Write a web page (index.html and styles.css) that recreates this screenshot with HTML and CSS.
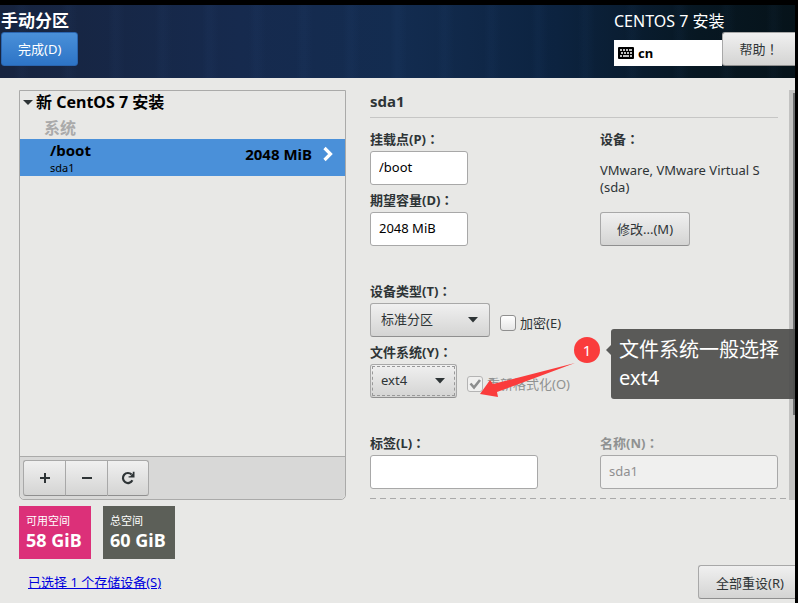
FILE: index.html
```html
<!DOCTYPE html>
<html lang="zh-CN">
<head>
    <meta charset="UTF-8">
    <title>手动分区 - CENTOS 7 安装</title>
    <link rel="stylesheet" href="styles.css">
</head>
<body>
    <header class="topbar">
        <div class="topbar-left">
            <h1>手动分区</h1>
            <button type="button" class="btn btn-done">完成(D)</button>
        </div>
        <div class="topbar-right">
            <div class="product">CENTOS 7 安装</div>
            <div class="topbar-tools">
                <div class="keyboard">
                    <svg width="16" height="12" viewBox="0 0 16 12">
                        <rect width="16" height="12" rx="1" fill="#000"/>
                        <path d="M2 3h2M5 3h2M8 3h2M11 3h3M3 6h2M6 6h2M9 6h2M12 6h2M2 9h2M5 9h6M12 9h2" stroke="#fff" stroke-width="1.6"/>
                    </svg>
                    <span>cn</span>
                </div>
                <button type="button" class="btn btn-help">帮助<span lang="zh-TW">！</span></button>
            </div>
        </div>
    </header>

    <main class="content">
        <section class="tree">
            <div class="tree-list">
                <div class="tree-root"><span class="expander"></span>新 CentOS 7 安装</div>
                <div class="tree-group">系统</div>
                <div class="tree-item">
                    <div class="mount">
                        <strong>/boot</strong>
                        <small>sda1</small>
                    </div>
                    <span class="size">2048 MiB</span>
                    <svg width="10" height="16" viewBox="0 0 10 16">
                        <path d="M1.5 2L7.5 8L1.5 14" fill="none" stroke="#fff" stroke-width="3.2"/>
                    </svg>
                </div>
            </div>
            <div class="toolbar">
                <div class="btn-group">
                    <button type="button" class="btn" aria-label="添加">
                        <svg width="12" height="12" viewBox="0 0 12 12"><path d="M6 1v10M1 6h10" stroke="#2e3436" stroke-width="2"/></svg>
                    </button>
                    <button type="button" class="btn" aria-label="删除">
                        <svg width="12" height="12" viewBox="0 0 12 12"><path d="M1 6h10" stroke="#2e3436" stroke-width="2"/></svg>
                    </button>
                    <button type="button" class="btn" aria-label="刷新">
                        <svg width="14" height="14" viewBox="0 0 14 14">
                            <path d="M11.4 9.3A5 5 0 1 1 10.6 3.6" fill="none" stroke="#2e3436" stroke-width="2.2"/>
                            <path d="M13.5 0.8V6.5H7.6V5.2H9.2L11.8 2.6V0.8Z" fill="#2e3436"/>
                        </svg>
                    </button>
                </div>
            </div>
        </section>

        <section class="details">
            <form class="panel">
                <h2>sda1</h2>
                <div class="row">
                    <div class="fields">
                        <div class="field">
                            <label for="mountPoint">挂载点(P)<span lang="zh-TW">：</span></label>
                            <input type="text" id="mountPoint" class="entry-short" value="/boot">
                        </div>
                        <div class="field">
                            <label for="capacity">期望容量(D)<span lang="zh-TW">：</span></label>
                            <input type="text" id="capacity" class="entry-short" value="2048 MiB">
                        </div>
                    </div>
                    <div class="device">
                        <h3>设备<span lang="zh-TW">：</span></h3>
                        <p>VMware, VMware Virtual S (sda)</p>
                        <button type="button" class="btn">修改...(M)</button>
                    </div>
                </div>

                <div class="fields">
                    <div class="field">
                        <label for="deviceType">设备类型(T)<span lang="zh-TW">：</span></label>
                        <div class="inline">
                            <select id="deviceType" class="select-type">
                                <option>标准分区</option>
                            </select>
                            <input type="checkbox" id="encrypt">
                            <label for="encrypt" class="check-label">加密(E)</label>
                        </div>
                    </div>
                    <div class="field">
                        <label for="fileSystem">文件系统(Y)<span lang="zh-TW">：</span></label>
                        <div class="inline">
                            <select id="fileSystem" class="select-fs">
                                <option>ext4</option>
                            </select>
                            <input type="checkbox" id="reformat" checked disabled>
                            <label for="reformat" class="check-label">重新格式化(O)</label>
                        </div>
                    </div>
                </div>

                <div class="row">
                    <div class="field">
                        <label for="label">标签(L)<span lang="zh-TW">：</span></label>
                        <input type="text" id="label" class="entry-label">
                    </div>
                    <div class="field disabled">
                        <label for="name">名称(N)<span lang="zh-TW">：</span></label>
                        <input type="text" id="name" value="sda1" disabled>
                    </div>
                </div>
            </form>
            <div class="scrollbar"><div class="thumb"></div></div>

            <!-- annotation over the file system field -->
            <div class="note">
                <svg class="note-arrow" width="96" height="36" viewBox="0 0 96 36">
                    <path d="M95 1L13 22L10 18L0 32L18 35L17 30Z" fill="#fa3c3c"/>
                </svg>
                <span class="note-number">1</span>
                <div class="note-text">文件系统一般选择 ext4</div>
            </div>
        </section>
    </main>

    <footer class="footer">
        <div class="summary">
            <div class="spaces">
                <div class="space space-free"><span>可用空间</span><strong>58 GiB</strong></div>
                <div class="space space-total"><span>总空间</span><strong>60 GiB</strong></div>
            </div>
            <a href="#">已选择 1 个存储设备(S)</a>
        </div>
        <button type="button" class="btn btn-reset">全部重设(R)</button>
    </footer>
</body>
</html>
```
FILE: styles.css
```css
* {
    box-sizing: border-box;
}

body {
    margin: 0;
    min-height: 100vh;
    display: flex;
    flex-direction: column;
    border-top: 5px solid #000;
    border-right: 3px solid #000;
    background-color: #e8e8e6;
    color: #2e3436;
    font-family: "Noto Sans", "Noto Sans CJK SC", sans-serif;
    font-size: 13px;
    line-height: 18px;
}

h1, h2, h3, p {
    margin: 0;
}

[lang="zh-TW"] {
    font-family: "Noto Sans CJK TC", sans-serif;
}

input, select, button {
    font-family: inherit;
    font-size: 13px;
    color: inherit;
}

.btn {
    height: 34px;
    padding: 0 16px 2px;
    border: 1px solid #a8a8a8;
    border-bottom-color: #8f8f8f;
    border-radius: 3px;
    background: linear-gradient(#f0f0f0, #d4d4d3);
    color: #2e3436;
    white-space: nowrap;
}

/* header */
.topbar {
    display: flex;
    justify-content: space-between;
    height: 73px;
    padding-top: 6px;
    background:
        repeating-linear-gradient(90deg, transparent 0 14px, rgba(70, 120, 190, 0.04) 20px 23px, transparent 31px 47px),
        linear-gradient(90deg, #17243f 0%, #162a4e 30%, #132c50 50%, #0c2340 70%, #071722 88%, #06131a 100%);
    color: #fff;
}

.topbar h1 {
    font-size: 17px;
    line-height: 20px;
}

.topbar-left {
    padding-left: 1px;
}

.btn-done {
    margin-top: 1px;
    border-color: #2a65b0;
    background: linear-gradient(#4a90d9, #2d74c6);
    color: #fff;
}

.product {
    font-size: 16px;
    line-height: 21px;
}

.topbar-tools {
    display: flex;
    align-items: flex-end;
}

.keyboard {
    display: flex;
    align-items: center;
    gap: 4px;
    width: 108px;
    height: 26px;
    padding-left: 4px;
    background-color: #fff;
    color: #000;
    font-weight: bold;
}

.btn-help {
    width: 73px;
    border-right: none;
    border-radius: 3px 0 0 3px;
}

/* partition list */
.content {
    flex: 1;
    display: grid;
    grid-template-columns: 327fr 425fr;
    gap: 24px;
    padding: 12px 0 0 19px;
}

.tree {
    display: flex;
    flex-direction: column;
    border: 1px solid #aaaaa9;
    border-radius: 0 0 5px 5px;
    color: #000;
}

.tree-list {
    flex: 1;
}

.tree-root {
    display: flex;
    align-items: center;
    gap: 3px;
    padding-left: 3px;
    font-size: 16px;
    font-weight: bold;
    line-height: 22px;
}

.expander {
    border: 5px solid transparent;
    border-top-color: #2e3436;
    border-bottom: none;
}

.tree-group {
    padding: 4px 0 0 24px;
    color: #aaa;
    font-size: 16px;
    font-weight: bold;
    line-height: 22px;
}

.tree-item {
    display: flex;
    align-items: center;
    padding: 1px 12px 0 30px;
    background-color: #4a90d9;
}

.mount {
    flex: 1;
    display: flex;
    flex-direction: column;
}

.mount strong, .size {
    font-size: 15px;
    font-weight: bold;
    line-height: 20px;
}

.mount small {
    font-size: 11px;
    line-height: 16px;
}

.size {
    margin-right: 11px;
    padding-bottom: 8px;
}

.tree-item svg {
    margin-bottom: 8px;
}

.toolbar {
    padding: 3px;
    border-top: 1px solid #aaaaa9;
    border-radius: 0 0 5px 5px;
    background-color: #d8d8d7;
}

.btn-group {
    display: flex;
}

.btn-group .btn {
    display: flex;
    align-items: center;
    justify-content: center;
    width: 42px;
    height: 36px;
    padding: 0;
    border-right: none;
    border-radius: 0;
}

.btn-group .btn:first-child {
    border-radius: 3px 0 0 3px;
}

.btn-group .btn:last-child {
    border-right: 1px solid #a8a8a8;
    border-radius: 0 3px 3px 0;
}

/* partition details */
.details {
    position: relative;
    display: flex;
}

.panel {
    flex: 1;
    display: flex;
    flex-direction: column;
    gap: 36px;
    padding: 0 11px 9px 0;
    background: repeating-linear-gradient(90deg, #aaa 0 6px, transparent 6px 10px) no-repeat left bottom 1px / 100% 1px;
}

.panel h2 {
    margin-bottom: -24px;
    padding-bottom: 5px;
    border-bottom: 1px solid #c6c6c5;
    font-size: 15px;
    line-height: 22px;
}

.row {
    display: grid;
    grid-template-columns: minmax(0, 230fr) minmax(0, 178fr);
}

.fields {
    display: flex;
    flex-direction: column;
    gap: 6px;
}

.field {
    display: flex;
    flex-direction: column;
    gap: 3px;
}

.field label, .device h3 {
    font-size: 13px;
    font-weight: bold;
    line-height: 18px;
}

input[type="text"] {
    height: 34px;
    padding: 0 8px 2px;
    border: 1px solid #a8a8a8;
    border-radius: 3px;
    background-color: #fff;
    color: #000;
}

input[type="text"]:disabled {
    background-color: #f0f0ef;
    color: #8f8f8f;
}

.entry-short {
    width: 98px;
}

.entry-label {
    width: 168px;
}

.disabled label {
    color: #8f9191;
}

.device p {
    margin: 14px 0 16px;
    line-height: 17px;
}

.inline {
    display: flex;
    align-items: center;
}

select {
    display: block;
    height: 34px;
    padding: 0 10px 2px;
    appearance: none;
    border: 1px solid #a8a8a8;
    border-bottom-color: #8f8f8f;
    border-radius: 3px;
    background: url("data:image/svg+xml,%3Csvg xmlns='http://www.w3.org/2000/svg' width='10' height='6'%3E%3Cpath d='M0 0h10L5 5.5z' fill='%232e3436'/%3E%3C/svg%3E") no-repeat right 11px center, linear-gradient(#f0f0f0, #d4d4d3);
}

.select-type {
    width: 120px;
}

.select-fs {
    width: 87px;
    outline: 1px dashed #999;
    outline-offset: -3px;
}

input[type="checkbox"] {
    appearance: none;
    width: 16px;
    height: 16px;
    margin: 6px 4px 0 10px;
    border: 1px solid #8f8f8f;
    border-radius: 3px;
    background: linear-gradient(#fff, #e6e6e6);
}

input[type="checkbox"]:disabled {
    border-color: #b4b4b4;
    background: #f0f0ef;
}

input[type="checkbox"]:checked {
    background: url("data:image/svg+xml,%3Csvg xmlns='http://www.w3.org/2000/svg' width='14' height='14'%3E%3Cpath d='M2.5 6.5L6 10.5L12 3' fill='none' stroke='%238c8e8e' stroke-width='2.6'/%3E%3C/svg%3E") no-repeat center, #f0f0ef;
}

.field .check-label {
    padding-top: 6px;
    font-weight: normal;
}

input:disabled + .check-label {
    color: #8f9191;
}

.scrollbar {
    width: 6px;
    padding: 3px 0 0 4px;
    background-color: #c2c2c1;
}

.thumb {
    height: 79%;
    background-color: #6d6f70;
}

/* annotation */
.note {
    position: absolute;
    top: 239px;
    right: 0;
    display: flex;
    align-items: flex-start;
    gap: 11px;
}

.note-arrow {
    position: absolute;
    top: 33px;
    left: -94px;
}

.note-number {
    width: 26px;
    height: 26px;
    margin-top: 8px;
    border-radius: 50%;
    background-color: #fa3c3c;
    color: #fff;
    font-size: 15px;
    line-height: 26px;
    text-align: center;
}

.note-text {
    position: relative;
    width: 184px;
    padding: 7px 8px;
    border-radius: 3px 0 0 3px;
    background-color: rgba(77, 77, 76, 0.92);
    color: #fff;
    font-size: 20px;
    line-height: 28px;
}

.note-text::before {
    content: "";
    position: absolute;
    top: 16px;
    left: -5px;
    border: 5px solid transparent;
    border-right-color: #5a5a59;
    border-left: none;
}

/* footer */
.footer {
    display: flex;
    justify-content: space-between;
    align-items: flex-end;
    padding: 6px 0 4px 19px;
}

.spaces {
    display: flex;
    gap: 12px;
}

.space {
    display: flex;
    flex-direction: column;
    width: 72px;
    padding: 6px 0 7px 7px;
    color: #fff;
}

.space span {
    font-size: 11px;
    line-height: 17px;
}

.space strong {
    font-size: 18px;
    line-height: 23px;
    white-space: nowrap;
}

.space-free {
    background-color: #dc3079;
}

.space-total {
    background-color: #5c5f58;
}

.summary a {
    display: inline-block;
    margin: 14px 0 8px 9px;
    color: #00d;
}

.btn-reset {
    padding: 0 11px 0 17px;
    border-right: none;
    border-radius: 3px 0 0 3px;
}
```
